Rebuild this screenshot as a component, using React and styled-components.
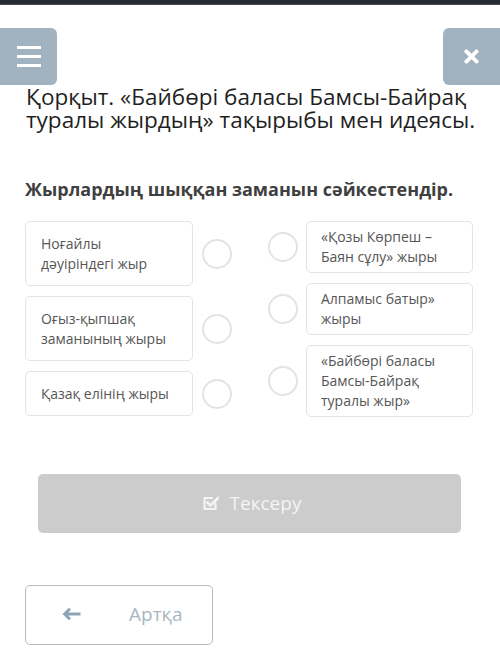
import React from "react";
import styled, { createGlobalStyle } from "styled-components";
import { FaTimes } from "react-icons/fa";

const GlobalStyle = createGlobalStyle`
  html, body { margin: 0; padding: 0; background: #ffffff; }
  body { font-family: "Open Sans", "Noto Sans", sans-serif; }
  * { box-sizing: border-box; }
`;

const Page = styled.div`
  width: 500px;
  min-height: 668px;
  background: #ffffff;
  overflow: hidden;
`;

const TopBar = styled.div`
  height: 5px;
  background: #272b36;
  border-bottom: 1px solid #4a4e58;
`;

const Header = styled.div`
  display: flex;
  justify-content: space-between;
  margin-top: 23px;
`;

const IconButton = styled.button`
  width: 57px;
  height: 57px;
  border: none;
  padding: 0;
  background: #a1b2c0;
  color: #ffffff;
  display: flex;
  align-items: center;
  justify-content: center;
  border-radius: ${(p) => (p.$side === "left" ? "0 6px 6px 0" : "6px 0 0 6px")};
`;

const Burger = styled.span`
  display: flex;
  flex-direction: column;
  gap: 6px;
  span {
    display: block;
    width: 24px;
    height: 3px;
    background: #ffffff;
  }
`;

const Title = styled.h1`
  margin: 1px 0 0;
  padding: 0 10px 0 26px;
  font-size: 22.5px;
  line-height: 22.5px;
  font-weight: 400;
  color: #1f1f1f;
  white-space: nowrap;
`;

const TitleLine = styled.span`
  display: block;
`;

const Subtitle = styled.h2`
  margin: 46px 0 0;
  padding: 0 25px;
  font-size: 18px;
  line-height: 24px;
  font-weight: 700;
  color: #3f3f3f;
  white-space: nowrap;
`;

const Match = styled.div`
  display: grid;
  grid-template-columns: 207px 206px;
  column-gap: 36px;
  padding: 0 26px 0 25px;
  margin-top: 20px;
`;

const Column = styled.div`
  display: flex;
  flex-direction: column;
  gap: 10px;
`;

const Row = styled.div`
  display: flex;
  align-items: center;
  gap: ${(p) => (p.$right ? "8px" : "9px")};
`;

const Card = styled.div`
  width: ${(p) => (p.$right ? "167px" : "168px")};
  border: 1px solid #e4e4e4;
  border-radius: 5px;
  padding: ${(p) => (p.$right ? "5px 8px 5px 14px" : "11.5px 8px 11.5px 15px")};
  font-size: 14px;
  line-height: 20px;
  color: #565656;
  background: #ffffff;
`;

const Radio = styled.span`
  flex: none;
  width: 30px;
  height: 30px;
  border-radius: 50%;
  border: 2.5px solid #e3e3e3;
  background: #ffffff;
`;

const CheckButton = styled.button`
  display: flex;
  align-items: center;
  justify-content: center;
  gap: 10px;
  margin: 57px 39px 0 38px;
  width: 423px;
  height: 59px;
  border: none;
  border-radius: 5px;
  background: #cccccc;
  color: #f4f4f4;
  font-family: "Open Sans", sans-serif;
  font-size: 19px;
  padding: 0 0 2px 4px;
`;

const BackButton = styled.button`
  display: flex;
  align-items: center;
  margin: 52px 0 0 25px;
  width: 188px;
  height: 60px;
  border: 1.5px solid #b3bbc1;
  border-radius: 5px;
  background: #ffffff;
  padding: 0 0 2px 36px;
  gap: 48px;
  font-family: "Open Sans", sans-serif;
  font-size: 19px;
  color: #a9b6bf;
`;

const CheckIcon = () => (
  <svg width="18" height="18" viewBox="0 0 18 18" aria-hidden="true">
    <path
      d="M13.5 9.5 V15 H2.5 V4 H10"
      fill="none"
      stroke="#f4f4f4"
      strokeWidth="2.2"
      strokeLinejoin="round"
      strokeLinecap="round"
    />
    <path
      d="M5.5 8.5 L8.5 11.5 L16 4"
      fill="none"
      stroke="#f4f4f4"
      strokeWidth="2.6"
      strokeLinejoin="round"
      strokeLinecap="round"
    />
  </svg>
);

const ArrowIcon = () => (
  <svg width="19" height="14" viewBox="0 0 19 14" aria-hidden="true">
    <path d="M0.5 7 L7 0.8 L9 2.8 L6.2 5.4 H18.5 V8.6 H6.2 L9 11.2 L7 13.2 Z" fill="#8fa3b3" />
  </svg>
);

const leftItems = [
  ["Ноғайлы", "дәуіріндегі жыр"],
  ["Оғыз-қыпшақ", "заманының жыры"],
  ["Қазақ елінің жыры"],
];

const rightItems = [
  ["«Қозы Көрпеш –", "Баян сұлу» жыры"],
  ["Алпамыс батыр»", "жыры"],
  ["«Байбөрі баласы", "Бамсы-Байрақ", "туралы жыр»"],
];

const Lines = ({ lines }) =>
  lines.map((l, i) => (
    <React.Fragment key={i}>
      {i > 0 && <br />}
      {l}
    </React.Fragment>
  ));

export default function App() {
  return (
    <Page>
      <GlobalStyle />
      <TopBar />
      <Header>
        <IconButton $side="left" aria-label="menu">
          <Burger>
            <span />
            <span />
            <span />
          </Burger>
        </IconButton>
        <IconButton $side="right" aria-label="close">
          <FaTimes size={21} />
        </IconButton>
      </Header>
      <Title>
        <TitleLine>Қорқыт. «Байбөрі баласы Бамсы-Байрақ</TitleLine>
        <TitleLine>туралы жырдың» тақырыбы мен идеясы.</TitleLine>
      </Title>
      <Subtitle>Жырлардың шыққан заманын сәйкестендір.</Subtitle>
      <Match>
        <Column>
          {leftItems.map((lines, i) => (
            <Row key={i}>
              <Card>
                <Lines lines={lines} />
              </Card>
              <Radio />
            </Row>
          ))}
        </Column>
        <Column>
          {rightItems.map((lines, i) => (
            <Row key={i} $right>
              <Radio />
              <Card $right>
                <Lines lines={lines} />
              </Card>
            </Row>
          ))}
        </Column>
      </Match>
      <CheckButton>
        <CheckIcon />
        <span>Тексеру</span>
      </CheckButton>
      <BackButton>
        <ArrowIcon />
        <span>Артқа</span>
      </BackButton>
    </Page>
  );
}
